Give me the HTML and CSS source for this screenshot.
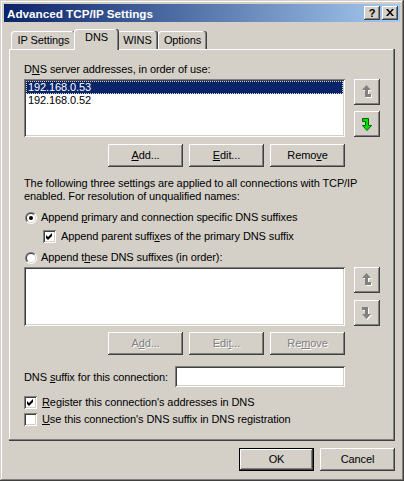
FILE: index.html
```html
<!DOCTYPE html>
<html>
<head>
<meta charset="utf-8">
<link rel="stylesheet" href="styles.css">
</head>
<body>
<div class="window">
  <div class="titlebar">
    <span class="title">Advanced TCP/IP Settings</span>
    <div class="tbtns">
      <span class="tbtn q">?</span>
      <span class="tbtn"><svg width="8" height="7" viewBox="0 0 8 7"><path d="M0 0h2l2 2.4L6 0h2L5 3.5 8 7H6L4 4.6 2 7H0l3-3.5z" fill="#000"/></svg></span>
    </div>
  </div>
  <div class="content">
    <div class="tabs">
      <div class="tab t-ip">IP Settings</div>
      <div class="tab active t-dns">DNS</div>
      <div class="tab t-wins">WINS</div>
      <div class="tab t-opt">Options</div>
    </div>
    <div class="panel">
      <div class="label">D<u>N</u>S server addresses, in order of use:</div>
      <div class="listrow">
        <div class="listbox">
          <div class="item selected">192.168.0.53</div>
          <div class="item">192.168.0.52</div>
        </div>
        <div class="arrows">
          <span class="sbtn"><svg width="12" height="14" viewBox="0 0 12 14"><path d="M5.5 0L10 5H7v4h3v3H4V5H1z" fill="#fff" transform="translate(1 1)"/><path d="M5.5 0L10 5H7v4h3v3H4V5H1z" fill="#808080"/></svg></span>
          <span class="sbtn"><svg width="12" height="14" viewBox="0 0 12 14"><path d="M5.5 0L10 5H7v4h3v3H4V5H1z" fill="#00e000" stroke="#006400" stroke-width="1" transform="rotate(180 5.5 6.5) translate(-0.5 -0.5)"/></svg></span>
        </div>
      </div>
      <div class="btnrow">
        <span class="btn"><span><u>A</u>dd...</span></span>
        <span class="btn"><span><u>E</u>dit...</span></span>
        <span class="btn"><span>Remo<u>v</u>e</span></span>
      </div>
      <p class="para">The following three settings are applied to all connections with TCP/IP<br>enabled. For resolution of unqualified names:</p>
      <div class="opt r1"><span class="radio"><span class="ri"><span class="rc"><span class="dot"></span></span></span></span><span>Append <u>p</u>rimary and connection specific DNS suffixes</span></div>
      <div class="opt c1 indent"><span class="check"><svg width="7" height="7" viewBox="0 0 7 7"><path d="M0 2l2 2 4-4v3L2 7 0 5z" fill="#000"/></svg></span><span>Append parent suffi<u>x</u>es of the primary DNS suffix</span></div>
      <div class="opt r2"><span class="radio"><span class="ri"><span class="rc"></span></span></span><span>Append t<u>h</u>ese DNS suffixes (in order):</span></div>
      <div class="listrow lr2">
        <div class="listbox"></div>
        <div class="arrows">
          <span class="sbtn"><svg width="12" height="14" viewBox="0 0 12 14"><path d="M5.5 0L10 5H7v4h3v3H4V5H1z" fill="#fff" transform="translate(1 1)"/><path d="M5.5 0L10 5H7v4h3v3H4V5H1z" fill="#808080"/></svg></span>
          <span class="sbtn"><svg width="12" height="14" viewBox="0 0 12 14"><g transform="rotate(180 5.5 6.5)"><path d="M5.5 0L10 5H7v4h3v3H4V5H1z" fill="#fff" transform="translate(-1 -1)"/><path d="M5.5 0L10 5H7v4h3v3H4V5H1z" fill="#808080"/></g></svg></span>
        </div>
      </div>
      <div class="btnrow br2">
        <span class="btn dis"><span>A<u>d</u>d...</span></span>
        <span class="btn dis"><span>Edi<u>t</u>...</span></span>
        <span class="btn dis"><span>Re<u>m</u>ove</span></span>
      </div>
      <div class="suffix">
        <span>DNS <u>s</u>uffix for this connection:</span>
        <span class="field"></span>
      </div>
      <div class="opt c2"><span class="check"><svg width="7" height="7" viewBox="0 0 7 7"><path d="M0 2l2 2 4-4v3L2 7 0 5z" fill="#000"/></svg></span><span><u>R</u>egister this connection's addresses in DNS</span></div>
      <div class="opt c3"><span class="check"></span><span><u>U</u>se this connection's DNS suffix in DNS registration</span></div>
    </div>
    <div class="footer">
      <span class="btn default"><span>OK</span></span>
      <span class="btn"><span>Cancel</span></span>
    </div>
  </div>
</div>
</body>
</html>
```

FILE: styles.css
```css
* { box-sizing: border-box; }
body {
  margin: 0;
  background: #d4d0c8;
  font-family: "Liberation Sans", Arial, sans-serif;
  font-size: 11px;
  letter-spacing: -0.1px;
  color: #000;
}
u { text-decoration: underline; text-underline-offset: 1px; }
.window {
  width: 404px;
  height: 481px;
  padding: 4px;
  background: #d4d0c8;
  box-shadow: inset -1px -1px #404040, inset 1px 1px #d4d0c8, inset -2px -2px #808080, inset 2px 2px #fff;
  display: flex;
  flex-direction: column;
}
.titlebar {
  height: 18px;
  background: linear-gradient(to right, #0a246a, #a6caf0);
  display: flex;
  align-items: center;
  justify-content: space-between;
  padding: 0 2px 0 3px;
}
.title {
  color: #fff;
  font-weight: bold;
  font-size: 11.7px;
  letter-spacing: 0;
}
.tbtns { display: flex; gap: 2px; }
.tbtn {
  width: 16px;
  height: 14px;
  background: #d4d0c8;
  box-shadow: inset -1px -1px #404040, inset 1px 1px #fff, inset -2px -2px #808080;
  display: flex;
  align-items: center;
  justify-content: center;
  padding-bottom: 1px;
}
.tbtn.q { font-weight: bold; font-size: 11px; line-height: 12px; }
.content {
  flex: 1;
  padding: 7px 5px 0 5px;
  display: flex;
  flex-direction: column;
}
.tabs {
  display: flex;
  align-items: flex-end;
  height: 20px;
  padding-left: 2px;
  position: relative;
  z-index: 1;
}
.tab {
  height: 18px;
  padding-top: 3px;
  line-height: 13px;
  text-align: center;
  background: #d4d0c8;
  border-radius: 3px 3px 0 0;
  box-shadow: inset -1px 0 #404040, inset -2px 0 #808080, inset 1px 1px #fff;
}
.t-ip { width: 65px; }
.t-dns { width: 41px; }
.t-wins { width: 41px; }
.t-opt { width: 49px; }
.tab.active {
  height: 21px;
  margin: 0 -2px -1px;
  width: 45px;
  padding-top: 2px;
  position: relative;
  z-index: 2;
}
.panel {
  height: 392px;
  background: #d4d0c8;
  box-shadow: inset -1px -1px #404040, inset -2px -2px #808080, inset 1px 1px #fff;
  padding: 14px 0 0 15px;
  display: flex;
  flex-direction: column;
}
.label { line-height: 13px; height: 13px; }
.listrow {
  display: flex;
  margin-top: 3px;
  height: 58px;
}
.lr2 { height: 59px; }
.listbox {
  width: 321px;
  height: 100%;
  background: #fff;
  padding: 2px;
  box-shadow: inset 1px 1px #808080, inset -1px -1px #fff, inset 2px 2px #404040, inset -2px -2px #d4d0c8;
}
.item {
  height: 13px;
  line-height: 13px;
  padding-left: 2px;
}
.item.selected {
  background: #0a246a;
  color: #fff;
  outline: 1px dotted #d4d0c8;
  outline-offset: -1px;
}
.arrows {
  margin-left: 9px;
  display: flex;
  flex-direction: column;
  justify-content: space-between;
}
.sbtn {
  width: 26px;
  height: 26px;
  background: #d4d0c8;
  box-shadow: inset -1px -1px #404040, inset 1px 1px #fff, inset -2px -2px #808080;
  display: flex;
  align-items: center;
  justify-content: center;
}
.btnrow {
  display: flex;
  gap: 6px;
  margin: 7px 0 0 84px;
}
.br2 { margin-top: 6px; }
.btn {
  width: 75px;
  height: 23px;
  display: flex;
  align-items: center;
  justify-content: center;
  background: #d4d0c8;
  box-shadow: inset -1px -1px #404040, inset 1px 1px #fff, inset -2px -2px #808080;
  padding-bottom: 1px;
}
.btn.dis {
  color: #808080;
  text-shadow: 1px 1px #fff;
}
.btn.default {
  border: 1px solid #000;
}
.para {
  margin: 10px 0 0;
  line-height: 13px;
}
.opt {
  display: flex;
  align-items: center;
  height: 13px;
  line-height: 13px;
  white-space: pre;
}
.r1 { margin-top: 8px; }
.c1 { margin-top: 6px; }
.r2 { margin-top: 8px; }
.indent { margin-left: 19px; }
.radio {
  width: 12px;
  height: 12px;
  margin: 0 4px 0 1px;
  border-radius: 50%;
  background: linear-gradient(135deg, #808080 50%, #fff 50%);
  padding: 1px;
  flex: none;
}
.ri {
  display: block;
  width: 10px;
  height: 10px;
  border-radius: 50%;
  background: linear-gradient(135deg, #404040 50%, #d4d0c8 50%);
  padding: 1px;
}
.rc {
  display: flex;
  width: 8px;
  height: 8px;
  border-radius: 50%;
  background: #fff;
  align-items: center;
  justify-content: center;
}
.dot {
  width: 4px;
  height: 4px;
  border-radius: 50%;
  background: #000;
}
.check {
  width: 13px;
  height: 13px;
  flex: none;
  margin-right: 5px;
  background: #fff;
  box-shadow: inset 1px 1px #808080, inset -1px -1px #fff, inset 2px 2px #404040, inset -2px -2px #d4d0c8;
  display: flex;
  align-items: center;
  justify-content: center;
}
.suffix {
  display: flex;
  align-items: center;
  justify-content: space-between;
  width: 321px;
  margin-top: 11px;
}
.field {
  width: 170px;
  height: 21px;
  background: #fff;
  box-shadow: inset 1px 1px #808080, inset -1px -1px #fff, inset 2px 2px #404040, inset -2px -2px #d4d0c8;
}
.c2 { margin-top: 9px; }
.c3 { margin-top: 4px; }
.footer {
  display: flex;
  justify-content: flex-end;
  gap: 6px;
  margin-top: 7px;
}
```
